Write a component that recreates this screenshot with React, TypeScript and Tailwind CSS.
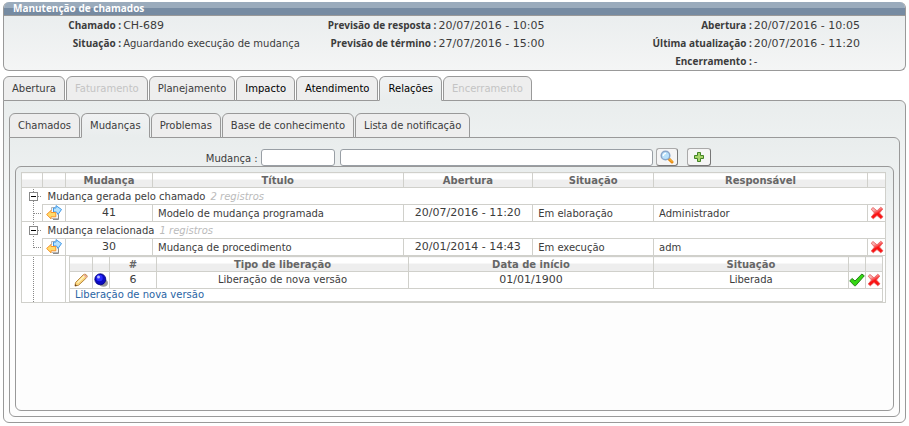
import type { ReactNode } from "react";
import clsx from "clsx";

const summary = [
  { label: "Chamado :", value: "CH-689", numeric: true },
  { label: "Previsão de resposta :", value: "20/07/2016 - 10:05", numeric: true },
  { label: "Abertura :", value: "20/07/2016 - 10:05", numeric: true },
  { label: "Situação :", value: "Aguardando execução de mudança" },
  { label: "Previsão de término :", value: "27/07/2016 - 15:00", numeric: true },
  { label: "Última atualização :", value: "20/07/2016 - 11:20", numeric: true },
  { label: "", value: "" },
  { label: "", value: "" },
  { label: "Encerramento :", value: "-" },
];

type TabItem = { label: string; active?: boolean; disabled?: boolean; strong?: boolean };

const mainTabs: TabItem[] = [
  { label: "Abertura" },
  { label: "Faturamento", disabled: true },
  { label: "Planejamento" },
  { label: "Impacto", strong: true },
  { label: "Atendimento", strong: true },
  { label: "Relações", active: true, strong: true },
  { label: "Encerramento", disabled: true },
];

const relationTabs: TabItem[] = [
  { label: "Chamados" },
  { label: "Mudanças", active: true },
  { label: "Problemas" },
  { label: "Base de conhecimento" },
  { label: "Lista de notificação" },
];

const groups = [
  {
    name: "Mudança gerada pelo chamado",
    count: "2 registros",
    id: "41",
    title: "Modelo de mudança programada",
    opened: "20/07/2016 - 11:20",
    status: "Em elaboração",
    owner: "Administrador",
  },
  {
    name: "Mudança relacionada",
    count: "1 registros",
    id: "30",
    title: "Mudança de procedimento",
    opened: "20/01/2014 - 14:43",
    status: "Em execução",
    owner: "adm",
  },
];

function Tabs({ items, label }: { items: TabItem[]; label: string }) {
  return (
    <div role="tablist" aria-label={label} className="relative z-10 -mb-px flex gap-px">
      {items.map((tab) => (
        <button
          key={tab.label}
          type="button"
          role="tab"
          aria-selected={!!tab.active}
          disabled={tab.disabled}
          className={clsx(
            "h-[25px] rounded-t-md border border-[#999] px-2 pt-px whitespace-nowrap",
            tab.active ? "border-b-[#e9eded] bg-linear-to-b from-[#f0f2f3] to-[#e9eded]" : "bg-[#eee]",
            tab.disabled && "text-[#c4c4c4]",
            tab.strong && "text-black",
          )}
        >
          {tab.label}
        </button>
      ))}
    </div>
  );
}

function Th({ children }: { children?: ReactNode }) {
  return (
    <th className="h-[15px] border border-[#d0d0cb] bg-linear-to-b from-white from-45% to-[#eee] to-45% px-0 pt-0.5 pb-0 leading-3 font-bold text-[#666]">
      {children}
    </th>
  );
}

function Td({ children, className }: { children?: ReactNode; className?: string }) {
  return <td className={clsx("h-[17px] border border-[#d0d0cb] p-0", className)}>{children}</td>;
}

function IconButton({ label, children }: { label: string; children: ReactNode }) {
  return (
    <button type="button" aria-label={label} className="mx-auto block">
      {children}
    </button>
  );
}

function TreeToggle({ first }: { first?: boolean }) {
  return (
    <svg width="20" height="16" className="block" shapeRendering="crispEdges">
      <path d={first ? "M11.5 1V16" : "M11.5 0V16"} stroke="#888" strokeDasharray="1 1" />
      <path d="M16 8.5H20" stroke="#888" strokeDasharray="1 1" />
      <rect x="7.5" y="4.5" width="8" height="8" fill="#fff" stroke="#888" />
      <path d="M9 8.5H14" stroke="#000" />
    </svg>
  );
}

function TreeBranch({ last }: { last?: boolean }) {
  return (
    <svg width="20" height="16" className="block" shapeRendering="crispEdges">
      <path d={last ? "M11.5 0V9" : "M11.5 0V16"} stroke="#888" strokeDasharray="1 1" />
      <path d="M12 8.5H20" stroke="#888" strokeDasharray="1 1" />
    </svg>
  );
}

function SwapIcon() {
  return (
    <svg width="16" height="16" viewBox="0 0 16 16" className="block">
      <path d="M5.5 6V2.5H9M5.5 13.5H12.5V9" fill="#f4f4f4" stroke="#b5b5b5" />
      <path d="M7.5 3H10V.6L15.5 4.5L12 9.5L10.5 7H7.5Z" fill="#b4e2ff" stroke="#3f97e6" strokeLinejoin="round" />
      <path d="M5 5.5L.6 9.5L5 13.8V11.8H9.8V7.5H5Z" fill="#ffdb6b" stroke="#f5942a" strokeLinejoin="round" />
      <path d="M12.5 9.5V14.5H7" fill="none" stroke="#8a8a8a" />
    </svg>
  );
}

function DeleteIcon() {
  return (
    <svg width="14" height="14" viewBox="0 0 14 14" className="block">
      <defs>
        <linearGradient id="cross" x1="0" y1="0" x2="0.5" y2="1">
          <stop offset="0.3" stopColor="#f8b0b0" />
          <stop offset="0.65" stopColor="#fa1414" />
        </linearGradient>
      </defs>
      <path
        d="M3 1.5L7 4.8L10.8 1.2L12.8 3L9.5 7L13 10.8L10.8 12.8L7 9.5L3.3 12.8L1.2 11L4.5 7L1.2 3.2Z"
        fill="url(#cross)"
        stroke="#e85a5a"
        strokeWidth="0.8"
        strokeLinejoin="round"
      />
    </svg>
  );
}

function PencilIcon() {
  return (
    <svg width="14" height="14" viewBox="0 0 14 14" className="block">
      <path d="M1.5 9.5L9.5 1.5Q11 .5 12.5 2T12.5 4.8L4.5 12.3L1 13Z" fill="#fbd67c" stroke="#b98a45" />
      <path d="M3.5 9.8L10.5 3" stroke="#fff2bf" strokeWidth="1.5" />
      <path d="M10 1.5L12.8 4.5" stroke="#e8a59c" strokeWidth="1.5" />
      <path d="M1.3 11L3 12.7L.8 13.2Z" fill="#69421b" />
    </svg>
  );
}

function BallIcon() {
  return (
    <svg width="14" height="14" viewBox="0 0 14 14" className="block">
      <ellipse cx="9.5" cy="10" rx="4.5" ry="3.8" fill="#999" />
      <circle cx="6.3" cy="6.3" r="5.5" fill="#0a0ac0" stroke="#00007c" strokeWidth="0.8" />
      <circle cx="5.5" cy="5" r="3.2" fill="#2929ff" />
      <circle cx="4.5" cy="4" r="1.5" fill="#b4b8ff" />
    </svg>
  );
}

function CheckIcon() {
  return (
    <svg width="16" height="14" viewBox="0 0 16 14" className="block">
      <path
        d="M.7 7.8L3.2 5.5L6 8L12.8 1L15.3 2.8L6.5 12.8H5.5Z"
        fill="#35d713"
        stroke="#258018"
        strokeLinejoin="round"
      />
    </svg>
  );
}

function SearchIcon() {
  return (
    <svg width="14" height="14" viewBox="0 0 14 14" className="block">
      <path d="M8.5 8.5L12 12" stroke="#e88c12" strokeWidth="3" strokeLinecap="round" />
      <path d="M9 8.5L12 11.5" stroke="#ffc64d" strokeLinecap="round" />
      <circle cx="5.5" cy="5.5" r="4.3" fill="#b9e2fc" stroke="#8ba6c9" strokeWidth="1.5" />
      <path d="M3.3 6Q3.5 3.5 6 3.3" fill="none" stroke="#fff" strokeWidth="1.3" />
    </svg>
  );
}

function PlusIcon() {
  return (
    <svg width="12" height="12" viewBox="0 0 12 12" className="block">
      <path d="M4.5 1.5H7.5V4.5H10.5V7.5H7.5V10.5H4.5V7.5H1.5V4.5H4.5Z" fill="#a6d46a" stroke="#438324" />
    </svg>
  );
}

function ReleaseTable() {
  return (
    <table className="w-full table-fixed border-collapse">
      <colgroup>
        <col className="w-[23px]" />
        <col className="w-[17px]" />
        <col className="w-[47px]" />
        <col className="w-[31%]" />
        <col />
        <col className="w-[24%]" />
        <col className="w-[17px]" />
        <col className="w-[17px]" />
      </colgroup>
      <thead>
        <tr>
          <Th />
          <Th />
          <Th>#</Th>
          <Th>Tipo de liberação</Th>
          <Th>Data de início</Th>
          <Th>Situação</Th>
          <Th />
          <Th />
        </tr>
      </thead>
      <tbody className="text-center">
        <tr>
          <Td>
            <IconButton label="Editar liberação"><PencilIcon /></IconButton>
          </Td>
          <Td>
            <IconButton label="Situação da liberação"><BallIcon /></IconButton>
          </Td>
          <Td className="text-[11px]">6</Td>
          <Td>Liberação de nova versão</Td>
          <Td className="text-[11px]">01/01/1900</Td>
          <Td>Liberada</Td>
          <Td>
            <IconButton label="Confirmar liberação"><CheckIcon /></IconButton>
          </Td>
          <Td>
            <IconButton label="Excluir liberação"><DeleteIcon /></IconButton>
          </Td>
        </tr>
        <tr>
          <td colSpan={8} className="h-[13px] border border-[#d0d0cb] px-[5px] py-0 text-left leading-3">
            <a href="#liberacao" className="text-[#2a64a4]">Liberação de nova versão</a>
          </td>
        </tr>
      </tbody>
    </table>
  );
}

function ChangesTable() {
  return (
    <table className="w-full table-fixed border-collapse bg-white">
      <colgroup>
        <col className="w-[21px]" />
        <col className="w-[23px]" />
        <col className="w-[87px]" />
        <col className="w-[29%]" />
        <col className="w-[15%]" />
        <col className="w-[14%]" />
        <col />
        <col className="w-[18px]" />
      </colgroup>
      <thead>
        <tr>
          <Th />
          <Th />
          <Th>Mudança</Th>
          <Th>Título</Th>
          <Th>Abertura</Th>
          <Th>Situação</Th>
          <Th>Responsável</Th>
          <Th />
        </tr>
      </thead>
      {groups.map((group, index) => (
        <tbody key={group.id}>
          <tr>
            <td className="border-l border-[#d0d0cb] p-0">
              <button type="button" aria-label={`Recolher ${group.name}`} className="block">
                <TreeToggle first={index === 0} />
              </button>
            </td>
            <td colSpan={7} className="h-[17px] border-y border-r border-[#d0d0cb] px-[5px] pt-0.5 pb-0">
              {group.name} <i className="ml-0.5 text-[#bbb]">{group.count}</i>
            </td>
          </tr>
          <tr>
            <td className="border-x border-b border-[#d0d0cb] p-0">
              <TreeBranch last={index === groups.length - 1} />
            </td>
            <Td>
              <IconButton label={`Abrir mudança ${group.id}`}><SwapIcon /></IconButton>
            </Td>
            <Td className="text-center text-[11px]">{group.id}</Td>
            <Td className="pt-px pl-[5px]">{group.title}</Td>
            <Td className="text-center text-[11px]">{group.opened}</Td>
            <Td className="pt-px pl-[5px]">{group.status}</Td>
            <Td className="pt-px pl-[5px]">{group.owner}</Td>
            <Td>
              <IconButton label={`Excluir mudança ${group.id}`}><DeleteIcon /></IconButton>
            </Td>
          </tr>
        </tbody>
      ))}
      <tbody>
        <tr>
          <Td>
            <svg width="20" height="45" className="block" shapeRendering="crispEdges">
              <path d="M11.5 0V45" stroke="#888" strokeDasharray="1 1" />
            </svg>
          </Td>
          <Td />
          <td colSpan={6} className="border border-[#d0d0cb] py-0 pr-0.5 pl-[3px] align-top">
            <ReleaseTable />
          </td>
        </tr>
      </tbody>
    </table>
  );
}

export default function App() {
  return (
    <main className="flex min-h-screen flex-col bg-white px-[3px] pt-0.5 pb-[3px] font-['DejaVu_Sans',Verdana,sans-serif] text-[10px] leading-[14px] text-[#3c3c3c]">
      <section className="overflow-hidden rounded-md border border-t-0 border-[#999] bg-linear-to-b from-[#e8eced] to-[#f4f5f5]">
        <h1 className="h-[14px] border-b border-[#999] bg-linear-to-b from-[#9aabbc] from-50% to-[#768ba2] to-50% px-[9px] font-['Open_Sans',Tahoma,sans-serif] leading-[13px] font-bold text-white">
          Manutenção de chamados
        </h1>
        <dl className="grid grid-cols-[13fr_22fr_13fr_22fr_13fr_17fr] leading-[19px]">
          {summary.map((field, index) => (
            <div key={index} className="col-span-2 grid h-[18px] grid-cols-subgrid whitespace-nowrap">
              <dt className="text-right font-['Open_Sans',Tahoma,sans-serif] font-bold">{field.label}</dt>
              <dd className={clsx("pl-0.5", field.numeric && "text-[11px]")}>{field.value}</dd>
            </div>
          ))}
        </dl>
      </section>

      <div className="mt-[5px] flex flex-1 flex-col">
        <Tabs items={mainTabs} label="Chamado" />
        <section className="flex flex-1 flex-col rounded-md rounded-tl-none border border-[#999] bg-linear-to-b from-[#e9eded] to-[#fdfdfd] to-50% px-[5px] pt-3 pb-[5px]">
          <Tabs items={relationTabs} label="Relações" />
          <div className="flex flex-1 flex-col rounded-md rounded-tl-none border border-[#999] bg-linear-to-b from-[#e9eded] to-[#fdfdfd] to-60% px-[5px] pt-2.5 pb-[5px]">
            <form className="flex items-end justify-center pl-2">
              <label htmlFor="mudanca">Mudança :</label>
              <input id="mudanca" className="ml-[3px] h-[17px] w-[74px] rounded-[3px] border border-[#999fa5] bg-white px-1" />
              <input
                aria-label="Título da mudança"
                className="ml-[5px] h-[17px] w-[36%] rounded-[3px] border border-[#999fa5] bg-white px-1"
              />
              <button
                type="button"
                aria-label="Pesquisar"
                className="ml-[3px] flex h-[18px] w-[22px] items-center justify-center rounded-[3px] border border-[#aaa] border-r-[#777] border-b-[#777] bg-[#f5f5f5]"
              >
                <SearchIcon />
              </button>
              <button
                type="button"
                aria-label="Adicionar"
                className="ml-[9px] flex h-[18px] w-6 items-center justify-center rounded-[3px] border border-[#aaa] border-r-[#777] border-b-[#777] bg-[#f5f5f5]"
              >
                <PlusIcon />
              </button>
            </form>
            <div className="flex-1 rounded-md border border-[#999] bg-linear-to-b from-[#e9eded] to-[#fdfdfd] to-55% px-[5px] pt-[5px] pr-[7px]">
              <ChangesTable />
            </div>
          </div>
        </section>
      </div>
    </main>
  );
}
